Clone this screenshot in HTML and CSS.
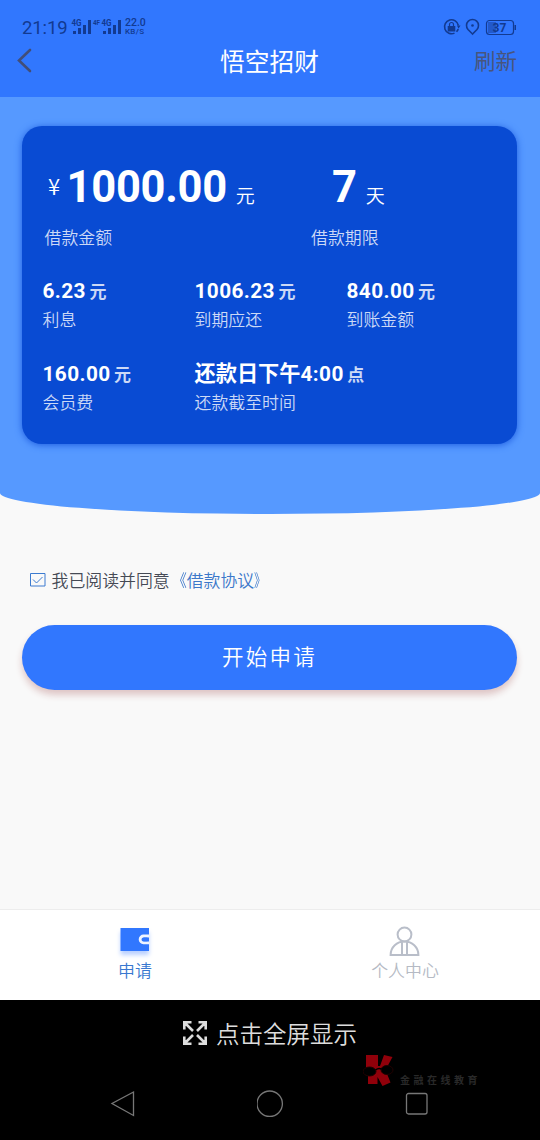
FILE: index.html
```html
<!DOCTYPE html>
<html lang="zh-CN">
<head>
<meta charset="utf-8">
<title>悟空招财</title>
<link rel="stylesheet" href="styles.css">
</head>
<body>
<div class="screen">
  <header class="header">
    <div class="status">
      <span class="clock">21:19</span>
      <svg class="signals" width="50" height="18" viewBox="0 0 50 18">
        <g class="net-label"><text x="0.500" y="8" textLength="10" lengthAdjust="spacingAndGlyphs">4G</text><text x="22" y="7" textLength="7" lengthAdjust="spacingAndGlyphs" class="net-small">4F</text><text x="30.500" y="8" textLength="10" lengthAdjust="spacingAndGlyphs">4G</text></g>
        <path d="M2 13h3v3h-3zM7 10h3v6h-3zM12 7h3v9h-3zM17 2h3v14h-3zM32 13h3v3h-3zM37 10h3v6h-3zM42 7h3v9h-3zM47 2h3v14h-3z"/>
      </svg>
      <span class="speed"><b>22.0</b><b class="speed-unit">KB/S</b></span>
      <svg class="status-icons" width="74" height="18" viewBox="0 0 74 18">
        <path class="line" d="M11.500 15.100A7 7 0 1 1 15.400 7.500M15.200 11A7 7 0 0 1 13.500 13.800"/>
        <path d="M14 7.500h3.500l-2 3.200zM4.700 8h7.600v5.500H4.700z"/>
        <path class="line thin" d="M6.500 8V6.500a2 2 0 0 1 4 0v1.500"/>
        <path class="line" d="M29.500 16L25 11.500A6 6 0 1 1 34 11.500Z"/>
        <circle cx="29.500" cy="7.500" r="1.300"/>
        <rect class="charge" x="45" y="4" width="8" height="11"/>
        <rect class="line thin" x="43.500" y="2.500" width="27" height="14" rx="3"/>
        <path d="M71.500 7h1.500v5h-1.500z"/>
        <text class="percent" x="49.500" y="13.800" textLength="14">37</text>
      </svg>
    </div>
    <nav class="titlebar">
      <svg class="back" width="16" height="26" viewBox="0 0 16 26"><path d="M13 2L2 12.500L13 23"/></svg>
      <h1 class="title">悟空招财</h1>
      <span class="refresh">刷新</span>
    </nav>
  </header>
  <main class="main">
    <section class="hero">
      <div class="card">
        <div class="primary">
          <div class="amount">
            <p class="big"><span class="yen">¥</span><b>1000.00</b><span class="unit">元</span></p>
            <p class="label">借款金额</p>
          </div>
          <div class="term">
            <p class="big"><b>7</b><span class="unit">天</span></p>
            <p class="label">借款期限</p>
          </div>
        </div>
        <div class="details">
          <div><p class="value">6.23<span>元</span></p><p class="label">利息</p></div>
          <div><p class="value">1006.23<span>元</span></p><p class="label">到期应还</p></div>
          <div><p class="value">840.00<span>元</span></p><p class="label">到账金额</p></div>
          <div><p class="value">160.00<span>元</span></p><p class="label">会员费</p></div>
          <div class="wide"><p class="value"><em>还款日下午</em>4:00<span>点</span></p><p class="label">还款截至时间</p></div>
        </div>
      </div>
    </section>
    <div class="agree">
      <svg width="16" height="14" viewBox="0 0 16 14"><path d="M.5.5h14.500v12.500H.5zM3 6.500l3.500 3.500l6-6"/></svg>
      <span>我已阅读并同意<a><i class="open">《</i>借款协议<i class="close">》</i></a></span>
    </div>
    <button class="apply">开始申请</button>
  </main>
  <footer class="tabs">
    <div class="tab active">
      <svg class="wallet" width="32" height="32" viewBox="0 0 32 32">
        <path class="fill" d="M1.500 2h28.500v23h-28.500z"/>
        <path class="clasp" d="M30 10h-5.500a3.300 3.300 0 0 0 0 6.800h5.500"/>
        <path class="fill" d="M24.500 11.500h4v3.800h-4z"/>
      </svg>
      <span>申请</span>
    </div>
    <div class="tab">
      <svg class="person" width="32" height="32" viewBox="0 0 32 32">
        <circle cx="15.500" cy="8.500" r="6.900"/>
        <path d="M1.600 29C1.600 21 8 15.500 15.500 15.500S29.400 21 29.400 29zM13 16v13M18 16v13"/>
      </svg>
      <span>个人中心</span>
    </div>
  </footer>
  <div class="system">
    <div class="fullscreen">
      <svg width="26" height="26" viewBox="0 0 26 26">
        <path d="M9.500 2.300H2.300V9.500M16.500 2.300h7.200V9.500M2.300 16.500v7.200H9.500M23.700 16.500v7.200H16.500M2.500 2.500l8.500 8.500M23.500 2.500l-8.500 8.500M2.500 23.500l8.500-8.500M23.500 23.500l-8.500-8.500"/>
      </svg>
      <span>点击全屏显示</span>
    </div>
    <div class="keys">
      <svg width="26" height="28" viewBox="0 0 26 28"><path d="M23.500 2v23.500L2 13.500z"/></svg>
      <svg width="28" height="28" viewBox="0 0 28 28"><circle cx="12.700" cy="13.700" r="12.700"/></svg>
      <svg width="24" height="24" viewBox="0 0 24 24"><rect x="1.500" y="1.500" width="20.500" height="20.500" rx="2"/></svg>
    </div>
    <div class="brand">
      <svg width="32" height="34" viewBox="0 0 32 34">
        <path class="red" d="M3 2h12v11h2l4-11l8.500 2l-7 13l5 12.500l-8 3.500l-5-9v7H5V23h3V14H3z"/>
        <ellipse cx="6.500" cy="18.500" rx="6.500" ry="4.500"/><ellipse cx="24" cy="17" rx="6" ry="4.500"/>
        <path class="bridge" d="M12.500 17q3-2.500 6-1"/>
      </svg>
      <span>金融在线教育</span>
    </div>
  </div>
</div>
</body>
</html>
```
FILE: styles.css
```css
* { box-sizing: border-box; margin: 0; padding: 0; }
body { font-family: Roboto, "Noto Sans CJK SC", sans-serif; background: #f9f9f9; }
.screen { position: relative; width: 540px; height: 1140px; display: flex; flex-direction: column; overflow: hidden; }
.header { height: 97px; background: #3177fe; padding-top: 18px; }
.status { height: 18px; display: flex; align-items: center; padding-left: 22px; color: #123a91; fill: #123a91; }
.clock { width: 49px; font-size: 18.500px; font-weight: 450; line-height: 20px; letter-spacing: -.1px; padding-top: 2px; }
.net-label { font: 700 8.500px Roboto, sans-serif; }
.net-small { font-size: 6.500px; }
.speed { display: flex; flex-direction: column; width: 26px; margin-left: 4px; font-size: 10.500px; line-height: 10px; }
.speed b { font-weight: 500; }
.speed .speed-unit { font-size: 8px; line-height: 8px; letter-spacing: .3px; }
.status-icons { margin-left: auto; margin-right: 23px; }
.line { fill: none; stroke: #123a91; stroke-width: 1.6; }
.thin { stroke-width: 1.2; }
.charge { fill: #2259cb; }
.percent { font: 700 12px Roboto, sans-serif; }
.titlebar { height: 50px; display: grid; grid-template-columns: 100px 1fr 100px; align-items: center; padding: 0 23px 0 17px; }
.back { fill: none; stroke: #424e78; stroke-width: 2.6; stroke-linecap: round; }
.title { color: #fff; font-size: 24.700px; font-weight: 400; line-height: 36px; text-align: center; padding: 3px 0 0 5px; }
.refresh { color: #48557c; font-size: 21.500px; line-height: 32px; text-align: right; padding-top: 2px; }
.main { height: 812px; }
.hero { height: 417px; padding: 29px 23px 0 22px; background: #5699ff; border-radius: 0 0 50% 50% / 0 0 21px 21px; }
.card { height: 318px; padding: 36px 20px 0; border-radius: 20px; background: #094bd3; color: #fff; box-shadow: 0 1px 7px #1e5de0; }
.primary { display: flex; height: 112px; }
.amount { width: 267px; padding-left: 2.500px; }
.amount .big { padding-left: 3.500px; }
.term { padding-left: 2px; }
.term .big { padding-left: 21px; }
.big { height: 63px; font-size: 43.500px; line-height: 52px; white-space: nowrap; }
.big b { letter-spacing: -.3px; }
.yen { font-family: "Noto Sans CJK SC", sans-serif; font-size: 22px; font-weight: 350; margin-right: 6.500px; position: relative; top: -7px; }
.unit { font-size: 19px; margin-left: 9px; font-weight: 350; position: relative; top: 1px; }
.label { font-size: 16.900px; line-height: 26px; color: #ccd9f6; font-weight: 350; }
.details { display: grid; grid-template-columns: 152px 152px 1fr; grid-auto-rows: 82.500px; padding-left: .5px; }
.value { height: 33px; line-height: 34px; font-size: 20.800px; letter-spacing: .4px; font-weight: 700; white-space: nowrap; }
.value em { font-style: normal; font-size: 21.200px; letter-spacing: 0; }
.value span { font-size: 17px; margin-left: 3.500px; color: #ccd9f6; font-weight: 600; letter-spacing: 0; }
.wide { grid-column: 2 / 4; }
.agree { display: flex; align-items: center; height: 26px; margin: 53px 0 0 29.500px; gap: 6px; font-size: 16.900px; line-height: 26px; color: #454a55; font-weight: 350; }
.agree span { padding-top: 2px; }
.agree svg { fill: none; stroke: #3c7bd0; }
.agree a { color: #3c78ca; }
.agree i { display: inline-block; font-style: normal; }
.agree .open { transform: scaleX(.85); transform-origin: right; }
.agree .close { transform: scaleX(.7); transform-origin: left; }
.apply { display: block; width: 495px; height: 65px; margin: 32px 0 0 22px; border: 0; border-radius: 33px; background: #3177fe; color: #fff; font: 350 21.500px/62px "Noto Sans CJK SC", sans-serif; padding-bottom: 3px; letter-spacing: 2.200px; box-shadow: 0 5px 7px #dec5c5; }
.tabs { height: 91px; display: grid; grid-template-columns: 1fr 1fr; background: #fff; border-top: 1px solid #ededed; }
.tab { display: flex; flex-direction: column; align-items: center; padding-top: 16px; font-size: 16.900px; font-weight: 350; line-height: 24px; color: #b5bac4; }
.tab span { margin-top: 1px; }
.active { color: #3978d0; }
.fill { fill: #3177fe; }
.clasp { fill: none; stroke: #eef4ff; stroke-width: 2.800; }
.wallet { filter: drop-shadow(0 4px 2px #b9d0ff); }
.person { fill: none; stroke: #b9bec9; stroke-width: 2; }
.system { height: 140px; background: #000; color: #ddd; }
.fullscreen { display: flex; align-items: center; height: 66px; padding-left: 182px; gap: 8px; font-size: 23.500px; font-weight: 350; line-height: 32px; }
.fullscreen span { padding-top: 3px; }
.fullscreen svg { fill: none; stroke: #ddd; stroke-width: 2.600; }
.keys { height: 76px; display: flex; justify-content: space-between; align-items: center; padding: 0 111px 0 110px; fill: none; stroke: #777; stroke-width: 1.300; }
.brand { position: absolute; left: 363px; top: 1053px; display: flex; gap: 5px; font-size: 10px; line-height: 16px; letter-spacing: 3.500px; color: #292929; font-weight: 700; white-space: nowrap; }
.brand span { padding-top: 20px; }
.brand ellipse { fill: #000; stroke: #200; }
.red { fill: #90000a; }
.bridge { fill: none; stroke: #000; stroke-width: 1.500; }
```
